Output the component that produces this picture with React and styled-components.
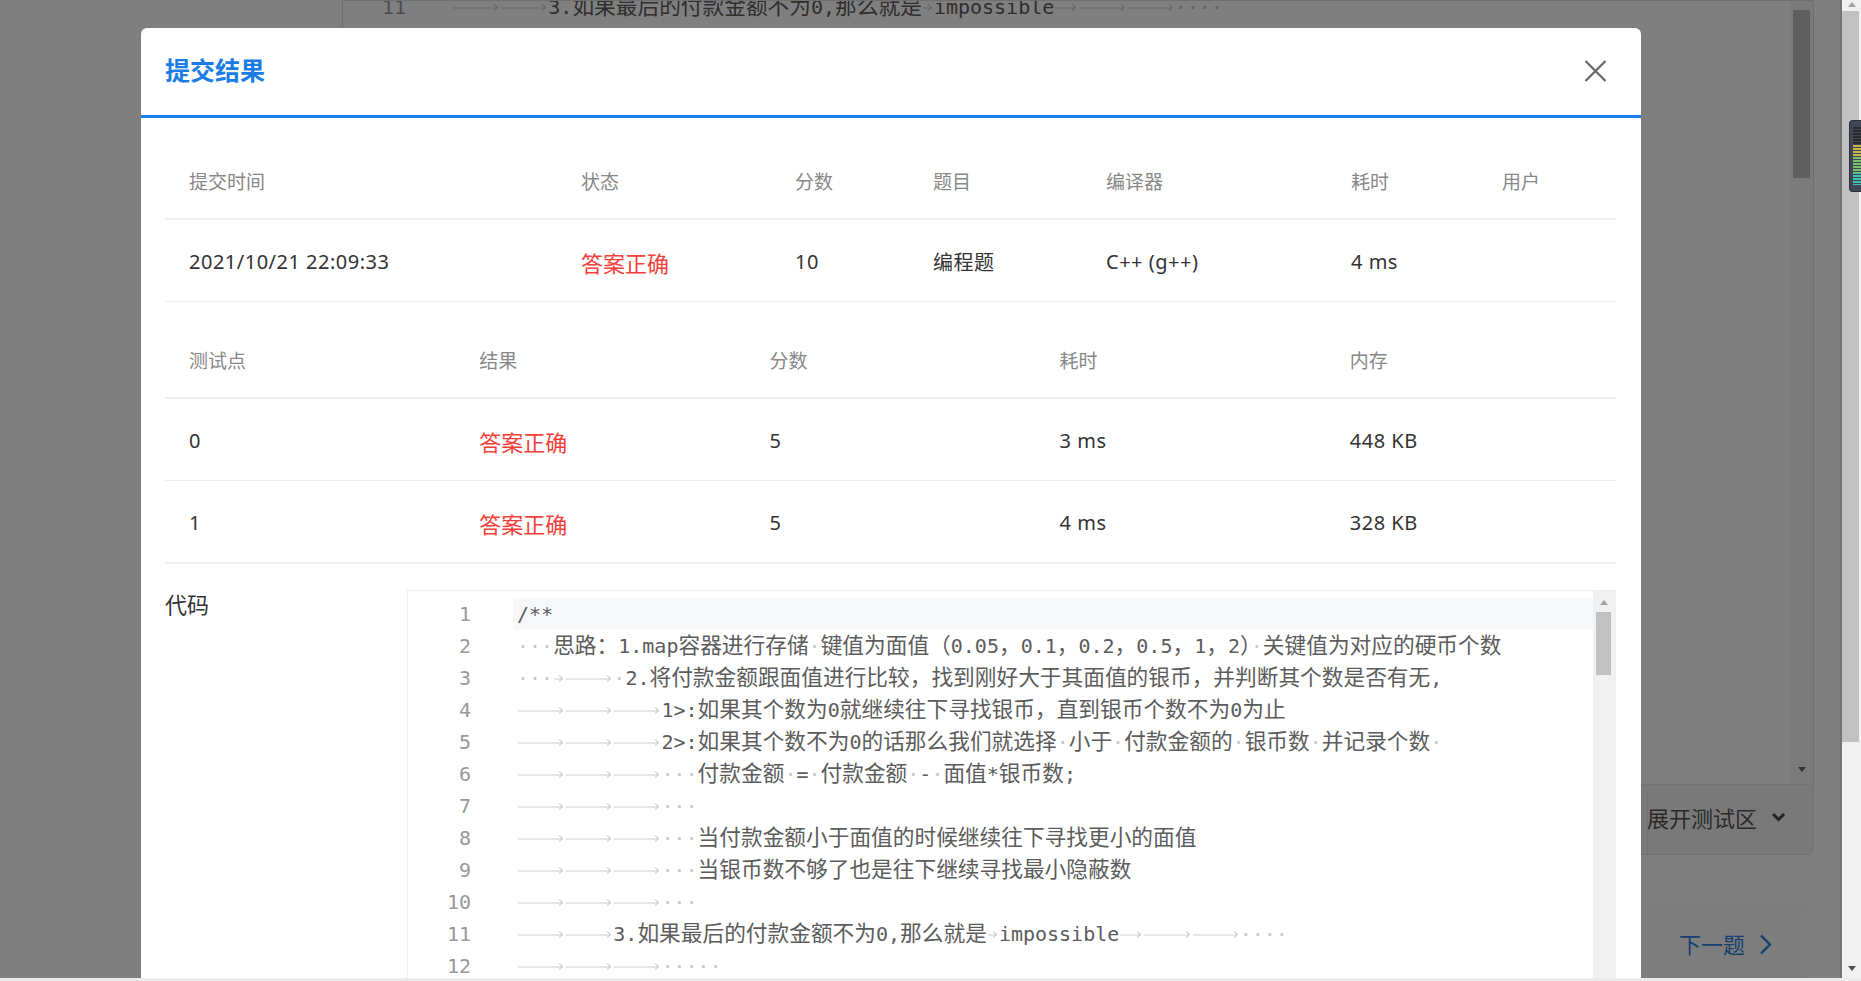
import React from "react";
import styled, { createGlobalStyle } from "styled-components";

const GlobalStyle = createGlobalStyle`
  html, body {
    margin: 0;
    padding: 0;
    height: 100%;
    overflow: hidden;
  }
  body {
    font-family: "Noto Sans", "Noto Sans CJK SC", sans-serif;
    background: #fff;
  }
  #root {
    height: 100%;
  }
`;

const MONO = `"DejaVu Sans Mono", "Noto Sans CJK SC", monospace`;

const CODE = [
    "/**",
    "   思路：1.map容器进行存储 键值为面值（0.05，0.1，0.2，0.5，1，2） 关键值为对应的硬币个数",
    "   \t\t 2.将付款金额跟面值进行比较，找到刚好大于其面值的银币，并判断其个数是否有无,",
    "\t\t\t1>:如果其个数为0就继续往下寻找银币，直到银币个数不为0为止",
    "\t\t\t2>:如果其个数不为0的话那么我们就选择 小于 付款金额的 银币数 并记录个数 ",
    "\t\t\t   付款金额 = 付款金额 - 面值*银币数;",
    "\t\t\t   ",
    "\t\t\t   当付款金额小于面值的时候继续往下寻找更小的面值",
    "\t\t\t   当银币数不够了也是往下继续寻找最小隐蔽数",
    "\t\t\t   ",
    "\t\t3.如果最后的付款金额不为0,那么就是\timpossible\t\t\t    ",
    "\t\t\t     ",
    "*/",
    "#include <iostream>",
    "#include <map>",
    "using namespace std;",
    "int main() {",
    "\tdouble n;",
    "\tcin >> n;",
    "\tmap<double, int> mp;",
    "\tdouble v[6] = {0.05, 0.1, 0.2, 0.5, 1, 2};",
    "\tfor (int i = 0; i < 6; i++) cin >> mp[v[i]];",
    "\tfor (int i = 5; i >= 0; i--) {",
    "\t\tif (mp[v[i]] == 0) continue;",
    "\t\tint k = min((int)(n / v[i] + 1e-9), mp[v[i]]);",
    "\t\tn -= k * v[i];",
    "\t}",
    "\treturn 0;",
    "}",
];

/* ---------- frame / fake browser chrome ---------- */

const Frame = styled.div`
    display: grid;
    grid-template-columns: 1fr 21px;
    grid-template-rows: 1fr 3px;
    height: 100vh;
`

const Viewport = styled.div`
    position: relative;
    overflow: hidden;
`

const BrowserBar = styled.div`
    position: relative;
    display: flex;
    flex-direction: column;
    background: #f1f1f1;
    border-left: 2px solid #747474;
`

const BottomBar = styled.div`
    grid-column: 1 / 3;
    background: #ebebeb;
`

const Meter = styled.div`
    position: absolute;
    top: 120px;
    right: 0;
    width: 12px;
    height: 72px;
    border-radius: 4px 0 0 4px;
    border: 1px solid #2a2f38;
    border-right: none;
    background: #3f4756;
    padding: 6px 0 6px 3px;
    box-sizing: border-box;

    & > div {
        height: 100%;
        background:
            repeating-linear-gradient(to bottom, transparent 0 2px, #3f4756 2px 3px),
            linear-gradient(to bottom, #2a2a2a 0 30%, #c9b845 30% 52%, #7cc06e 52% 80%, #3cc0b0 80%);
    }
`

/* ---------- scrollbars ---------- */

const Track = styled.div`
    flex: 0 0 ${p => p.$w}px;
    display: flex;
    flex-direction: column;
    background: ${p => p.$bg};
`

const Thumb = styled.div`
    flex-shrink: 0;
    margin: ${p => p.$top}px ${p => p.$right}px 0 ${p => p.$left}px;
    height: ${p => p.$h}px;
    background: ${p => p.$color};
`

const Arrow = styled.div`
    flex-shrink: 0;
    align-self: center;
    width: 0;
    height: 0;
    border-left: ${p => p.$size}px solid transparent;
    border-right: ${p => p.$size}px solid transparent;
    ${p => p.$dir === "up"
        ? `border-bottom: ${p.$size + 1}px solid ${p.$color}; margin-top: ${p.$gap}px;`
        : `border-top: ${p.$size + 1}px solid ${p.$color}; margin-top: auto; margin-bottom: ${p.$gap}px;`}
`

/* ---------- code editor ---------- */

const EditorBox = styled.div`
    display: flex;
    height: ${p => (p.$height ? `${p.$height}px` : "auto")};
    border-left: 1px solid ${p => p.$border};
    border-top: 1px solid ${p => p.$border};
    border-right: 1px solid ${p => p.$border};
    background: #fff;
    overflow: hidden;
`

const EditorLines = styled.div`
    flex: 1;
    min-width: 0;
    overflow: hidden;
    padding-top: ${p => p.$pad}px;
    & > div:first-child {
        margin-top: ${p => p.$shift}px;
    }
`

const CodeLine = styled.div`
    display: flex;
    height: 32px;
    line-height: 32px;
    font-family: ${MONO};
    font-size: 20px;
`

const LineNo = styled.span`
    flex: 0 0 63px;
    margin-right: 42px;
    text-align: right;
    color: #999;
`

const LineText = styled.span`
    flex: 1;
    padding-left: 4px;
    white-space: pre;
    color: #5c5c5c;
    background: ${p => (p.$active ? "#f7f8fa" : "transparent")};
`

const Cjk = styled.span`
    font-size: 21.7px;
`

const Space = styled.span`
    color: #c9c9c9;
`

const Tab = styled.span`
    display: inline-block;
    position: relative;
    width: ${p => p.$cols}ch;
    height: 32px;
    vertical-align: top;

    &::before {
        content: "";
        position: absolute;
        left: 1px;
        right: 3px;
        top: 16px;
        height: 2px;
        background: #e7e7e7;
    }
    &::after {
        content: "";
        position: absolute;
        right: 3px;
        top: 14px;
        width: 4px;
        height: 4px;
        border-top: 1.5px solid #c6c6c6;
        border-right: 1.5px solid #c6c6c6;
        transform: rotate(45deg);
    }
`

const CJK_RE = /[\u3000-\u9fff\uff00-\uffef]/;

function renderCode(text) {
    const out = [];
    let col = 0;
    let buf = "";
    let bufCjk = false;
    const flush = () => {
        if (buf) {
            out.push(bufCjk
                ? <Cjk key={out.length}>{buf}</Cjk>
                : <span key={out.length}>{buf}</span>);
            buf = "";
        }
    };
    for (const ch of text) {
        if (ch === "\t") {
            flush();
            const w = 4 - (col % 4);
            out.push(<Tab key={out.length} $cols={w}/>);
            col += w;
        } else if (ch === " ") {
            flush();
            out.push(<Space key={out.length}>·</Space>);
            col += 1;
        } else {
            const isCjk = CJK_RE.test(ch);
            if (buf && isCjk !== bufCjk) flush();
            bufCjk = isCjk;
            buf += ch;
            col += 1;
        }
    }
    flush();
    return out;
}

const CodeEditor = ({ lines, firstLine = 1, activeLine, shift = 0, pad = 0, height, border, children }) => (
    <EditorBox $height={height} $border={border}>
        <EditorLines $shift={shift} $pad={pad}>
            {lines.map((text, i) => (
                <CodeLine key={i}>
                    <LineNo>{firstLine + i}</LineNo>
                    <LineText $active={firstLine + i === activeLine}>{renderCode(text)}</LineText>
                </CodeLine>
            ))}
        </EditorLines>
        {children}
    </EditorBox>
);

/* ---------- background page ---------- */

const Page = styled.div`
    display: grid;
    grid-template-columns: 342px 1fr 26px;
    height: 100%;
    background: #fff;
`

const Workspace = styled.div`
    display: flex;
    flex-direction: column;
    min-width: 0;
`

const TestBar = styled.div`
    height: 71px;
    box-sizing: border-box;
    flex-shrink: 0;
    display: flex;
    align-items: center;
    justify-content: flex-end;
    gap: 14px;
    padding: 0 27px 6px 0;
    background: #f3f3f3;
    border: 1px solid #e6e6e6;
    border-radius: 0 0 6px 6px;
    font-size: 22px;
    color: #555;
`

const Footer = styled.div`
    margin-top: 50px;
    margin-right: 7px;
    flex: 1;
    display: flex;
    justify-content: flex-end;
    align-items: flex-start;
    gap: 14px;
    padding: 23px 35px 0 0;
    border-top: 1px solid #eeeeee;
    background: #fafafa;
    font-size: 22px;
    line-height: 30px;
    color: #2f7fe0;

    svg {
        margin-top: 5px;
    }
`

/* ---------- modal ---------- */

const Overlay = styled.div`
    position: absolute;
    inset: 0;
    background: rgba(0, 0, 0, 0.5);
    overflow: hidden;
`

const Modal = styled.section`
    width: 1500px;
    margin: 28px 0 0 141px;
    background: #fff;
    border-radius: 6px 6px 0 0;
`

const ModalHeader = styled.header`
    box-sizing: border-box;
    height: 90px;
    display: flex;
    align-items: center;
    justify-content: space-between;
    padding: 0 34px 5px 24px;
    border-bottom: 3px solid #1f7fe8;
`

const Title = styled.h2`
    margin: 0;
    font-family: "Noto Sans CJK SC", sans-serif;
    font-size: 25px;
    font-weight: 700;
    color: #1a7de6;
`

const Close = styled.button`
    width: 23px;
    height: 22px;
    margin-top: 4px;
    padding: 0;
    border: none;
    background: none;
    cursor: pointer;
    display: flex;
`

const ModalBody = styled.div`
    padding: 26px 25px 0 24px;
`

const Table = styled.table`
    width: 100%;
    border-collapse: collapse;
    table-layout: fixed;
    margin-top: ${p => p.$gap || 0}px;

    tbody tr:last-child td {
        border-bottom-width: ${p => (p.$closed ? 2 : 1)}px;
        border-bottom-color: ${p => (p.$closed ? "#f0f0f0" : "#eeeeee")};
    }
`

const Th = styled.th`
    height: 74px;
    padding: 0 0 0 24px;
    text-align: left;
    font-weight: 400;
    font-size: 19px;
    color: #888;
    border-bottom: 2px solid #f0f0f0;
`

const Td = styled.td`
    height: 79px;
    padding: 2px 0 0 24px;
    font-size: ${p => (p.$status ? 22 : 20)}px;
    letter-spacing: ${p => (p.$status ? 0 : 0.5)}px;
    color: ${p => (p.$status ? "#f5403a" : "#333")};
    border-bottom: 1px solid #eeeeee;
    white-space: nowrap;
`

const CodeSection = styled.div`
    display: grid;
    grid-template-columns: 242px 1fr;
    margin-top: 26px;
`

const CodeLabel = styled.div`
    padding-top: 3px;
    font-size: 22px;
    line-height: 1;
    color: #333;
`

const SUBMIT_COLS = [392, 214, 138, 173, 245, 151, 138];
const SUBMIT_HEAD = ["提交时间", "状态", "分数", "题目", "编译器", "耗时", "用户"];
const SUBMIT_ROW = ["2021/10/21 22:09:33", "答案正确", "10", "编程题", "C++ (g++)", "4 ms", ""];

const CASE_HEAD = ["测试点", "结果", "分数", "耗时", "内存"];
const CASES = [
    ["0", "答案正确", "5", "3 ms", "448 KB"],
    ["1", "答案正确", "5", "4 ms", "328 KB"],
];

const ChevronDown = () => (
    <svg width="15" height="10" viewBox="0 0 15 10">
        <polyline points="2,2 7.5,7.5 13,2" fill="none" stroke="#444" strokeWidth="3"/>
    </svg>
);

const ChevronRight = () => (
    <svg width="13" height="21" viewBox="0 0 13 21">
        <polyline points="2,1.5 11,10.5 2,19.5" fill="none" stroke="#2f7fe0" strokeWidth="2.4"/>
    </svg>
);

const App = () => {
    return (<>
        <GlobalStyle/>
        <Frame>
            <Viewport>
                <Page>
                    <div/>
                    <Workspace>
                        <CodeEditor lines={CODE.slice(10)} firstLine={11} shift={-10} height={783} border="#dedede">
                            <Track $w={22} $bg="#f5f5f5">
                                <Thumb $top={9} $h={168} $left={2} $right={3} $color="#bebebe"/>
                                <Arrow $dir="down" $size={4} $gap={12} $color="#666"/>
                            </Track>
                        </CodeEditor>
                        <TestBar>
                            展开测试区
                            <ChevronDown/>
                        </TestBar>
                        <Footer>
                            下一题
                            <ChevronRight/>
                        </Footer>
                    </Workspace>
                    <div/>
                </Page>

                <Overlay>
                    <Modal>
                        <ModalHeader>
                            <Title>提交结果</Title>
                            <Close aria-label="close">
                                <svg width="23" height="22" viewBox="0 0 23 22">
                                    <path d="M1.5 1 L21.5 21 M21.5 1 L1.5 21" stroke="#666" strokeWidth="2.2" fill="none"/>
                                </svg>
                            </Close>
                        </ModalHeader>
                        <ModalBody>
                            <Table>
                                <colgroup>
                                    {SUBMIT_COLS.map((w, i) => <col key={i} style={{width: w}}/>)}
                                </colgroup>
                                <thead>
                                <tr>{SUBMIT_HEAD.map(h => <Th key={h}>{h}</Th>)}</tr>
                                </thead>
                                <tbody>
                                <tr>
                                    {SUBMIT_ROW.map((v, i) => <Td key={i} $status={i === 1}>{v}</Td>)}
                                </tr>
                                </tbody>
                            </Table>

                            <Table $gap={21} $closed>
                                <thead>
                                <tr>{CASE_HEAD.map(h => <Th key={h}>{h}</Th>)}</tr>
                                </thead>
                                <tbody>
                                {CASES.map(row => (
                                    <tr key={row[0]}>
                                        {row.map((v, i) => <Td key={i} $status={i === 1}>{v}</Td>)}
                                    </tr>
                                ))}
                                </tbody>
                            </Table>

                            <CodeSection>
                                <CodeLabel>代码</CodeLabel>
                                <CodeEditor lines={CODE} activeLine={1} pad={7} border="#eeeeee">
                                    <Track $w={22} $bg="#f1f1f1">
                                        <Arrow $dir="up" $size={4} $gap={9} $color="#a3a3a3"/>
                                        <Thumb $top={7} $h={63} $left={3} $right={4} $color="#c1c1c1"/>
                                    </Track>
                                </CodeEditor>
                            </CodeSection>
                        </ModalBody>
                    </Modal>
                </Overlay>
            </Viewport>

            <BrowserBar>
                <Arrow $dir="up" $size={4} $gap={2} $color="#a3a3a3"/>
                <Thumb $top={4} $h={731} $left={0} $right={2} $color="#c1c1c1"/>
                <Arrow $dir="down" $size={4} $gap={7} $color="#505050"/>
                <Meter>
                    <div/>
                </Meter>
            </BrowserBar>
            <BottomBar/>
        </Frame>
    </>)
}

export default App;
